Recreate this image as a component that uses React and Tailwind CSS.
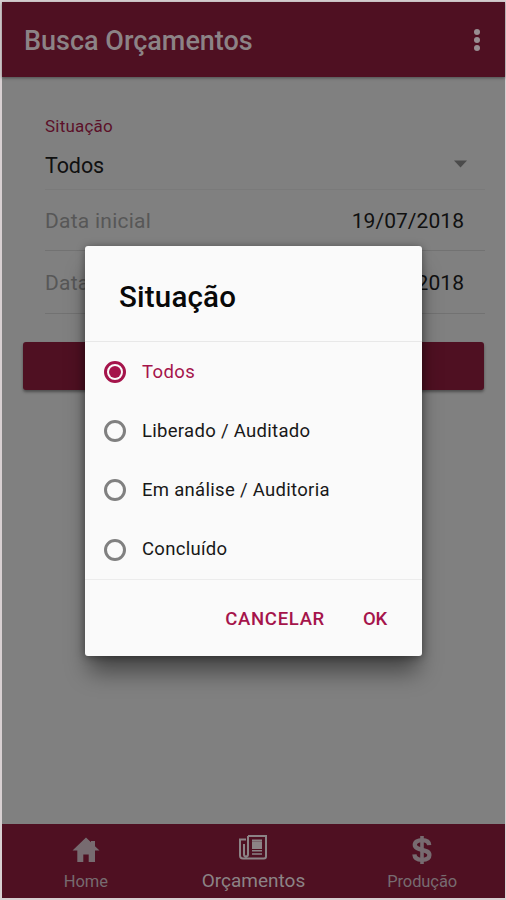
const options = ["Todos", "Liberado / Auditado", "Em análise / Auditoria", "Concluído"];

function Home() {
  return (
    <svg width="28" height="26" viewBox="0 0 28 26" fill="currentColor">
      <path d="M14 .5 .5 13.5h4.800V25h6v-7.500h5.400V25H23V13.500h4.500L23 9.200V4h-4v1.300z" />
    </svg>
  );
}

function News() {
  return (
    <svg width="28" height="25" viewBox="0 0 28 25" fill="none" stroke="currentColor" strokeWidth="2">
      <path d="M9 1h18v20.500a2 2 0 0 1-2 2H4a3 3 0 0 1-3-3V4.500h6M9 1v18.500a2 2 0 0 1-4 0V9" />
      <path d="M13 8.200h10M13 12h10" strokeWidth="3.800" />
      <path d="M13 5.200h10M13 15.800h10M13 19h10" strokeWidth="1.500" />
    </svg>
  );
}

function Dollar() {
  return (
    <svg width="22" height="30" viewBox="0 0 22 30" fill="none" stroke="currentColor" strokeWidth="4.3">
      <path d="M18.2 10.2C18 6.8 15 5.2 11 5.2S3.8 7 3.8 9.8c0 6.6 14.6 3.4 14.6 10.2 0 3.3-3.2 4.8-7.3 4.8-4.5 0-7.5-1.8-7.700-5.500" />
      <path d="M11 1v28" strokeWidth="3.6" />
    </svg>
  );
}

function Field({ label, value }) {
  return (
    <div className="flex items-center justify-between border-b border-[#727272] pt-[4px] pr-[21px] text-[21px]">
      <span className="tracking-[0.25px] text-[#575757]">{label}</span>
      <span className="tracking-[0.05px] text-[#101010]">{value}</span>
    </div>
  );
}

export default function App() {
  return (
    <div className="relative h-[900px] w-[506px] overflow-hidden bg-[#d8d0d2] pt-[2px] pr-[1px] pb-[2px] pl-[2px] font-['Roboto',sans-serif]">
      <div className="flex h-full flex-col bg-[#808080]">
        <header className="flex h-[75px] shrink-0 items-center justify-between bg-[#4f1022] pr-[25px] pl-[22px] text-[#8c8386] shadow-[0_1px_3px_rgba(0,0,0,0.4)]">
          <h1 className="pt-[3px] text-[27px] font-medium whitespace-nowrap">Busca Orçamentos</h1>
          <div className="flex flex-col gap-[2px]">
            <i className="size-[6px] rounded-full bg-[#988e92]" />
            <i className="size-[6px] rounded-full bg-[#988e92]" />
            <i className="size-[6px] rounded-full bg-[#988e92]" />
          </div>
        </header>
        <main className="flex-1 pt-[38px]">
          <div className="ml-[43px] w-[440px]">
            <div className="flex h-[75px] flex-col border-b border-[#7a7a7a]">
              <span className="h-[24px] text-[17px] leading-[23px] tracking-[0.2px] text-[#5c1029]">Situação</span>
              <div className="flex h-[54px] items-center justify-between pr-[18px] text-[21.5px] text-[#101010]">
                <span className="pt-[5px] tracking-[-0.1px]">Todos</span>
                <svg width="13" height="8" viewBox="0 0 13 8" fill="#4b4b4b"><path d="M0 .5h13L6.5 7.5z" /></svg>
              </div>
            </div>
            <div className="grid grid-rows-[61px_63px]">
              <Field label="Data inicial" value="19/07/2018" />
              <Field label="Data final" value="19/07/2018" />
            </div>
          </div>
          <button className="mt-[28px] ml-[21px] flex h-[48px] w-[461px] rounded-[3px] bg-[#4f1022] shadow-[0_2px_3px_rgba(0,0,0,0.4)]" aria-label="Buscar" />
        </main>
        <nav className="grid h-[74px] shrink-0 grid-cols-3 bg-[#4f1022] text-[#776b70]">
          <div className="flex flex-col items-center pt-[11px]">
            <div className="flex h-[30px] items-center"><Home /></div>
            <span className="text-[16.500px] leading-[34px] tracking-[-0.1px]">Home</span>
          </div>
          <div className="flex flex-col items-center pt-[8px] text-[#8c8386]">
            <div className="flex h-[30px] items-center"><News /></div>
            <span className="text-[19px] leading-[38px]">Orçamentos</span>
          </div>
          <div className="flex flex-col items-center pt-[10px]">
            <div className="ml-[2px] flex h-[31px] items-center"><Dollar /></div>
            <span className="ml-[2px] text-[16.500px] leading-[34px] tracking-[-0.1px]">Produção</span>
          </div>
        </nav>
      </div>

      <section role="dialog" className="absolute top-[246px] left-[85px] flex h-[410px] w-[337px] flex-col rounded-[3px] bg-[#fafafa] shadow-[0_20px_22px_-4px_rgba(0,0,0,0.45),0_1px_8px_rgba(0,0,0,0.4)]">
        <h2 className="h-[96px] border-b border-[#e8e8e8] pl-[34px] text-[29.500px] leading-[102px] font-medium tracking-[0.2px] text-[#080808]">Situação</h2>
        <div className="flex h-[238px] flex-col border-b border-[#ececec]">
          {options.map((option, index) => (
            <div key={option} className="flex h-[59.400px] shrink-0 items-center pl-[19px]">
              <span className={index === 0 ? "flex size-[22px] items-center justify-center rounded-full border-[3px] border-[#a5144b]" : "size-[22px] rounded-full border-[3px] border-[#808080]"}>
                {index === 0 && <i className="size-[12px] rounded-full bg-[#a5144b]" />}
              </span>
              <span className={index === 0 ? "ml-[16px] pt-[2px] text-[18.500px] tracking-[0.4px] text-[#a5144b]" : "ml-[16px] pt-[1px] text-[18.500px] tracking-[0.3px] text-[#181818]"}>{option}</span>
            </div>
          ))}
        </div>
        <div className="flex flex-1 items-center justify-end gap-[38px] pt-[4px] pr-[35px] text-[18.500px] font-medium text-[#a5144b]">
          <button className="tracking-[0.7px]">CANCELAR</button>
          <button className="tracking-[-0.2px]">OK</button>
        </div>
      </section>
    </div>
  );
}
